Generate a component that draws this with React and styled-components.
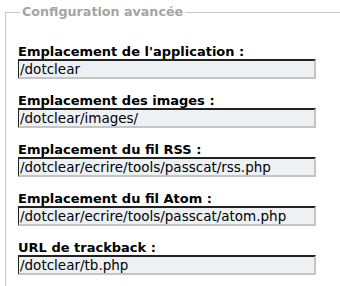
import React from 'react';
import styled, { createGlobalStyle } from 'styled-components';

const GlobalStyle = createGlobalStyle`
  html, body {
    margin: 0;
    padding: 0;
    background: #fff;
    overflow: hidden;
  }
  body {
    font-family: "DejaVu Sans", Verdana, sans-serif;
    font-size: 12px;
    color: #000;
  }
`;

const fields = [
  { id: 'app', label: "Emplacement de l'application :", value: '/dotclear' },
  { id: 'img', label: 'Emplacement des images :', value: '/dotclear/images/' },
  { id: 'rss', label: 'Emplacement du fil RSS :', value: '/dotclear/ecrire/tools/passcat/rss.php' },
  { id: 'atom', label: 'Emplacement du fil Atom :', value: '/dotclear/ecrire/tools/passcat/atom.php' },
  { id: 'tb', label: 'URL de trackback :', value: '/dotclear/tb.php' },
];

export default function App() {
  return (
    <>
      <GlobalStyle />
      <Fieldset>
        <Legend>Configuration avancée</Legend>
        {fields.map(f => (
          <Row key={f.id}>
            <Label htmlFor={f.id}>{f.label}</Label>
            <Input id={f.id} type="text" defaultValue={f.value} />
          </Row>
        ))}
      </Fieldset>
    </>
  );
}

const Fieldset = styled.fieldset`
  margin: 5px 0 0 5px;
  padding: 25px 0 0 12px;
  width: 380px;
  height: 320px;
  border: 1px solid #c8c8c8;
  box-sizing: border-box;
`;

const Legend = styled.legend`
  margin-left: 2px;
  padding: 0 2px;
  color: #a4a4a4;
  font-weight: bold;
  font-size: 12.7px;
  line-height: 14px;
`;

const Row = styled.p`
  margin: 0 0 14px;
  padding: 0;
`;

const Label = styled.label`
  display: block;
  font-weight: bold;
  font-size: 13px;
  line-height: 15px;
`;

const Input = styled.input`
  display: block;
  box-sizing: border-box;
  width: 298px;
  height: 20px;
  margin: 0;
  padding: 0 0 0 1px;
  font-family: "DejaVu Sans", Verdana, sans-serif;
  font-size: 13.5px;
  color: #000;
  background: #edf1f4;
  border-style: solid;
  border-width: 2px 2px 2px 1px;
  border-color: #222 #c4c4c4 #c4c4c4 #222;
  outline: none;
`;
